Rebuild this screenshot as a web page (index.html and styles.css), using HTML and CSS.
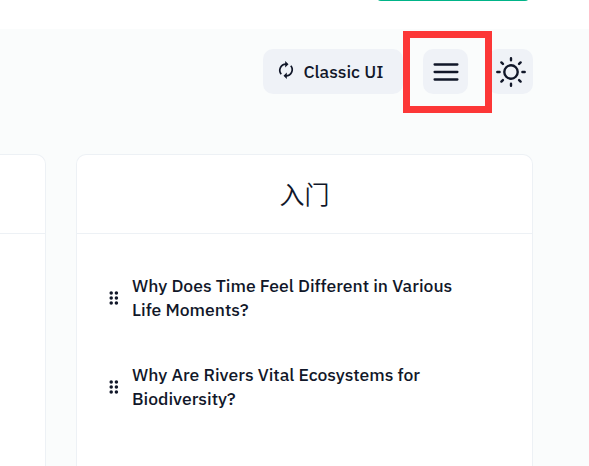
FILE: index.html
```
<!DOCTYPE html>
<html lang="en">
<head>
<meta charset="utf-8">
<title>Board</title>
<link rel="stylesheet" href="styles.css">
</head>
<body>
<header class="topbar"><div class="primary-button"></div></header>
<main class="page">
  <div class="toolbar">
    <button class="button classic">
      <svg width="20" height="20" viewBox="0 0 20 20" fill="none" stroke="currentColor" stroke-width="1.7"><path d="M5.2 14.3A6.2 6.2 0 0 1 10 4.2M14.8 5.7A6.2 6.2 0 0 1 10 15.8"/><path d="M9.2 1 12.5 4.2 9.2 7.4ZM10.8 12.6 7.5 15.8 10.8 19Z" fill="currentColor" stroke="none"/></svg>
      <span>Classic UI</span>
    </button>
    <div class="menu-slot">
      <button class="button square" aria-label="Menu">
        <svg width="30" height="30" viewBox="0 0 30 30" fill="none" stroke="currentColor" stroke-width="2.3" stroke-linecap="round"><path d="M3.6 7.5h22.8M3.6 15h22.8M3.6 22.5h22.8"/></svg>
      </button>
      <div class="highlight"></div>
    </div>
    <button class="button square" aria-label="Theme">
      <svg width="30" height="30" viewBox="0 0 30 30" fill="none" stroke="currentColor" stroke-width="2.4" stroke-linecap="round"><circle cx="15" cy="15" r="6.7"/><path d="M15 1.3v2M15 26.7v2M1.3 15h2.3M26.4 15h2.3M5.4 5.4l1.5 1.5M23.1 23.1l1.5 1.5M5.4 24.6l1.5-1.5M23.1 6.9l1.5-1.5"/></svg>
    </button>
  </div>
  <div class="columns">
    <section class="card"><div class="card-head"></div></section>
    <section class="card">
      <div class="card-head"><h2>入门</h2></div>
      <ul class="items">
        <li>
          <svg class="grip" width="10" height="14" viewBox="0 0 10 14" fill="currentColor"><circle cx="2.2" cy="2" r="1.75"/><circle cx="7.4" cy="2" r="1.75"/><circle cx="2.2" cy="7" r="1.75"/><circle cx="7.4" cy="7" r="1.75"/><circle cx="2.2" cy="12" r="1.75"/><circle cx="7.4" cy="12" r="1.75"/></svg>
          <p>Why Does Time Feel Different in Various<br>Life Moments?</p>
        </li>
        <li>
          <svg class="grip" width="10" height="14" viewBox="0 0 10 14" fill="currentColor"><circle cx="2.2" cy="2" r="1.75"/><circle cx="7.4" cy="2" r="1.75"/><circle cx="2.2" cy="7" r="1.75"/><circle cx="7.4" cy="7" r="1.75"/><circle cx="2.2" cy="12" r="1.75"/><circle cx="7.4" cy="12" r="1.75"/></svg>
          <p>Why Are Rivers Vital Ecosystems for<br>Biodiversity?</p>
        </li>
      </ul>
    </section>
  </div>
</main>
</body>
</html>
```
FILE: styles.css
```
* { box-sizing: border-box; }
body {
  margin: 0;
  height: 466px;
  overflow: hidden;
  background: #fafcfc;
  color: #111729;
  font: 500 17.55px/24px "IBM Plex Sans", Roboto, "Noto Sans CJK SC", sans-serif;
}
.topbar {
  height: 29px;
  padding-right: 60px;
  background: #fff;
  display: flex;
  justify-content: flex-end;
  align-items: flex-start;
  overflow: hidden;
}
.primary-button {
  width: 152px;
  height: 45px;
  margin-top: -44px;
  border-radius: 4px;
  background: #00b488;
}
.page { padding: 20px 56px 0 0; }
.toolbar {
  display: flex;
  justify-content: flex-end;
  gap: 20px;
}
.button {
  height: 45px;
  border: 0;
  border-radius: 10px;
  padding: 0;
  background: #eff2f7;
  color: inherit;
  font: inherit;
  display: flex;
  align-items: center;
}
.square { width: 45px; justify-content: center; }
.classic {
  width: 140px;
  padding-left: 13px;
  gap: 7.5px;
  white-space: nowrap;
}
.classic svg { flex: none; margin-top: -3px; }
.menu-slot { position: relative; }
.highlight {
  position: absolute;
  left: -20px;
  top: -18px;
  width: 89px;
  height: 82px;
  border: 7px solid #fc3737;
  z-index: 1;
}
.columns {
  display: grid;
  grid-template-columns: 457px 457px;
  gap: 30px;
  justify-content: end;
  margin-top: 60px;
}
.card {
  height: 312px;
  background: #fff;
  border: 1px solid #edf1f5;
  border-bottom: 0;
  border-radius: 10px 10px 0 0;
}
.card-head {
  height: 79px;
  border-bottom: 1px solid #edf1f5;
  display: flex;
  align-items: center;
  justify-content: center;
}
h2 {
  margin: 0;
  padding-bottom: 2px;
  font: 350 25px/38px "Noto Sans CJK SC", sans-serif;
}
.items {
  list-style: none;
  margin: 0;
  padding: 40px 32px 0;
  display: flex;
  flex-direction: column;
  gap: 41px;
}
.items li { display: flex; align-items: center; gap: 13px; }
.grip { flex: none; }
p { margin: 0; white-space: nowrap; }
```
